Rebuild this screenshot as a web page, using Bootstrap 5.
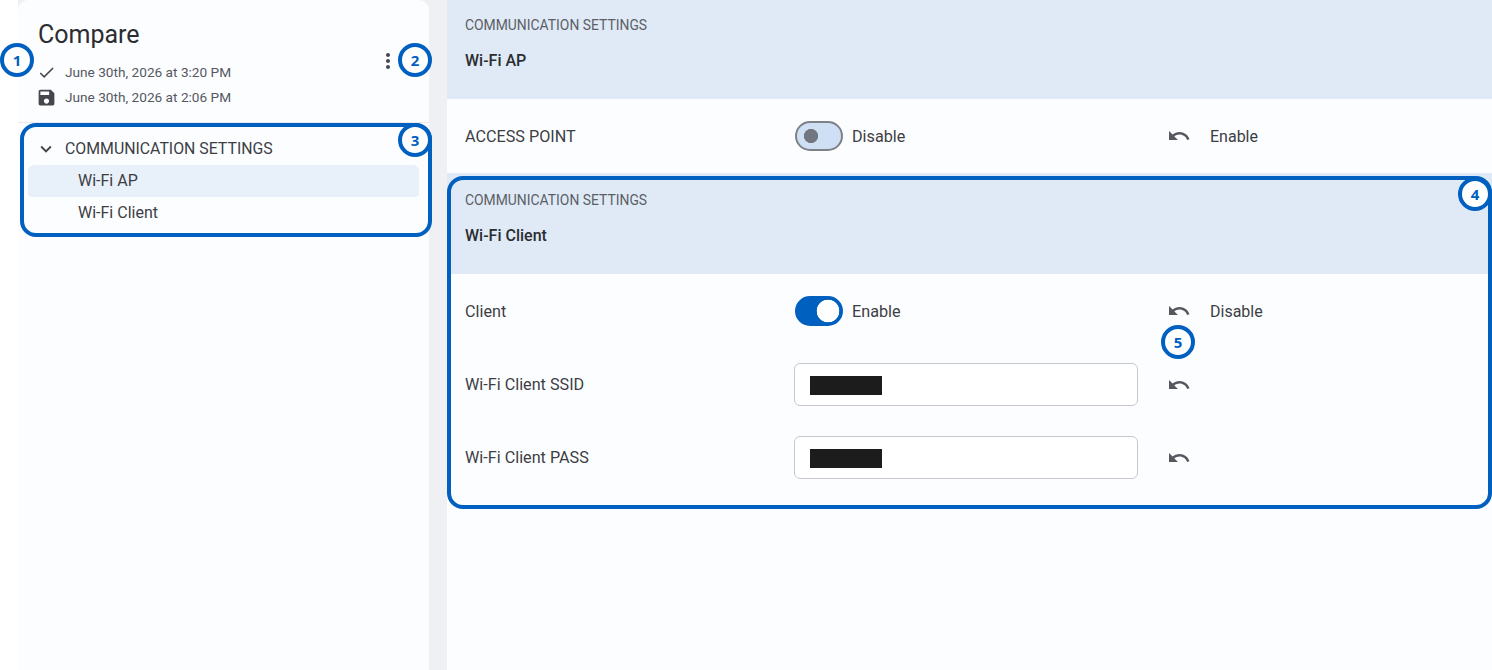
<!DOCTYPE html>
<html lang="en">
<head>
    <meta charset="UTF-8">
    <meta name="viewport" content="width=device-width, initial-scale=1.0">
    <title>Compare</title>
    <link rel="stylesheet" href="https://cdn.jsdelivr.net/npm/bootstrap@5.3.0/dist/css/bootstrap.min.css">
    <style>
        html, body { height: 100%; overflow: hidden; }
        body {
            background-color: #fff;
            color: #3c3e44;
            font-family: Roboto, "Liberation Sans", sans-serif;
            font-size: 16px;
            position: relative;
        }
        .page-wrap { height: 670px; padding-left: 18px; background: #eff0f4; box-shadow: inset 18px 0 0 #fff; }
        .side-panel { width: 411px; background: #fcfdff; border-radius: 10px 10px 0 0; flex-shrink: 0; }
        .main-panel { margin-left: 18px; background: #fcfdff; }
        .side-head { height: 123px; padding: 20px 29px 0 18px; border-bottom: 1px solid #e9eaee; }
        .side-title { font-size: 25px; line-height: 30px; font-weight: 400; color: #2b2d31; margin: 0 0 10px 2px; }
        .date-line { height: 25px; font-size: 13.65px; color: #55585f; gap: 8px; }
        .date-line svg { width: 21px; height: 21px; fill: #44474d; flex-shrink: 0; }
        .date-line svg.tick { width: 19px; height: 19px; margin: 0 1px; }
        .kebab { margin-top: 29px; width: 24px; height: 24px; fill: #44474d; }
        .tree-head { height: 33px; margin-top: 9px; padding: 1px 0 0 17px; gap: 8px; font-size: 15.85px; }
        .tree-head svg { width: 22px; height: 22px; fill: #44474d; margin-top: -1px; }
        .tree-list { margin: 0 10px; --bs-list-group-bg: transparent; --bs-list-group-border-width: 0; }
        .tree-item { height: 32px; padding: 0 0 0 50px; line-height: 31px; font-size: 16px; color: #3c3e44; border-radius: 4px; }
        .tree-item.is-current { background: #e8f0f9; }
        .sect-head { height: 101px; padding: 18px 18px 0; background: #dfeaf6; }
        .sect-first { margin-top: -2px; }
        .sect-label { font-size: 13.9px; line-height: 18px; color: #5c5f66; }
        .sect-name { font-size: 16px; line-height: 20px; font-weight: 500; color: #2b2d31; margin-top: 17px; }
        .cfg-row { height: 73px; padding-left: 18px; font-size: 16.2px; }
        .cfg-tall { height: 74px; }
        .cfg-label { width: 329px; flex-shrink: 0; padding-top: 1px; }
        .cfg-tall .cfg-label { padding-top: 2px; }
        .cfg-control { width: 344px; flex-shrink: 0; gap: 9px; font-size: 16.2px; padding-left: 1px; }
        .cfg-control span { padding-top: 2px; }
        .cfg-control.is-input { padding-left: 0; }
        .cfg-undo { margin-left: 29px; width: 24px; height: 24px; fill: #55585f; flex-shrink: 0; }
        .cfg-old { margin-left: 19px; font-size: 16px; padding-top: 1px; }
        .form-switch .tog { width: 48px; height: 30px; margin: 0; float: none; border-radius: 15px; box-shadow: none; flex-shrink: 0; }
        .form-switch .tog-off {
            background-color: #cfe0f5;
            border: 2px solid #7d8188;
            background-image: radial-gradient(circle at 14px 50%, #72767e 6.8px, transparent 7.4px);
            background-position: 0 0;
        }
        .form-switch .tog-on {
            background-color: #0060bf;
            border: 2px solid #0060bf;
            background-image: radial-gradient(circle at 31px 50%, #fff 11px, transparent 11.6px);
            background-position: 0 0;
        }
        .mask-field { width: 344px; height: 43px; padding: 12px 15px; background: #fff; border-color: #c6c8cd; }
        .mask-bar { width: 72px; height: 19px; background: #1c1c1c; }
        .mark-box { position: absolute; border: 4px solid #0060bf; pointer-events: none; }
        .mark-dot {
            position: absolute; width: 34px; height: 34px; border: 4px solid #0060bf; border-radius: 50%;
            background: #fff; color: #0060bf; font: 700 15px/26px "Open Sans", sans-serif; text-align: center;
        }
    </style>
</head>
<body>
    <svg width="0" height="0" class="position-absolute">
        <symbol id="i-check" viewBox="0 0 24 24"><path d="M9 16.17L4.83 12l-1.42 1.41L9 19 21 7l-1.41-1.41z"/></symbol>
        <symbol id="i-save" viewBox="0 0 24 24"><path d="M17 3H5c-1.11 0-2 .9-2 2v14c0 1.1.89 2 2 2h14c1.1 0 2-.9 2-2V7l-4-4zm-5 16c-1.66 0-3-1.34-3-3s1.34-3 3-3 3 1.34 3 3-1.34 3-3 3zm3-10H5V5h10v4z"/></symbol>
        <symbol id="i-more" viewBox="0 0 24 24"><path d="M12 8c1.1 0 2-.9 2-2s-.9-2-2-2-2 .9-2 2 .9 2 2 2zm0 2c-1.1 0-2 .9-2 2s.9 2 2 2 2-.9 2-2-.9-2-2-2zm0 6c-1.1 0-2 .9-2 2s.9 2 2 2 2-.9 2-2-.9-2-2-2z"/></symbol>
        <symbol id="i-down" viewBox="0 0 24 24"><path d="M16.59 8.59L12 13.17 7.41 8.59 6 10l6 6 6-6z"/></symbol>
        <symbol id="i-undo" viewBox="0 0 24 24"><path d="M12.5 8c-2.65 0-5.05.99-6.9 2.6L2 7v9h9l-3.62-3.62c1.39-1.16 3.16-1.88 5.12-1.88 3.54 0 6.55 2.31 7.6 5.5l2.37-.78C21.08 11.03 17.15 8 12.5 8z"/></symbol>
    </svg>

    <div class="page-wrap d-flex">
        <aside class="side-panel">
            <div class="side-head d-flex justify-content-between">
                <div>
                    <h1 class="side-title">Compare</h1>
                    <div class="date-line d-flex align-items-center"><svg class="tick"><use href="#i-check"/></svg>June 30th, 2026 at 3:20 PM</div>
                    <div class="date-line d-flex align-items-center"><svg><use href="#i-save"/></svg>June 30th, 2026 at 2:06 PM</div>
                </div>
                <svg class="kebab"><use href="#i-more"/></svg>
            </div>
            <div class="tree-head d-flex align-items-center"><svg><use href="#i-down"/></svg>COMMUNICATION SETTINGS</div>
            <div class="list-group tree-list">
                <a class="list-group-item tree-item is-current">Wi-Fi AP</a>
                <a class="list-group-item tree-item">Wi-Fi Client</a>
            </div>
        </aside>

        <main class="main-panel flex-grow-1">
            <div class="sect-head sect-first">
                <div class="sect-label">COMMUNICATION SETTINGS</div>
                <div class="sect-name">Wi-Fi AP</div>
            </div>
            <div class="cfg-row cfg-tall d-flex align-items-center">
                <div class="cfg-label">ACCESS POINT</div>
                <div class="cfg-control form-check form-switch d-flex align-items-center mb-0">
                    <input class="form-check-input tog tog-off" type="checkbox" role="switch"><span>Disable</span>
                </div>
                <svg class="cfg-undo"><use href="#i-undo"/></svg>
                <div class="cfg-old">Enable</div>
            </div>

            <div class="sect-head">
                <div class="sect-label">COMMUNICATION SETTINGS</div>
                <div class="sect-name">Wi-Fi Client</div>
            </div>
            <div class="cfg-row cfg-tall d-flex align-items-center">
                <div class="cfg-label">Client</div>
                <div class="cfg-control form-check form-switch d-flex align-items-center mb-0">
                    <input class="form-check-input tog tog-on" type="checkbox" role="switch" checked><span>Enable</span>
                </div>
                <svg class="cfg-undo"><use href="#i-undo"/></svg>
                <div class="cfg-old">Disable</div>
            </div>
            <div class="cfg-row d-flex align-items-center">
                <div class="cfg-label">Wi-Fi Client SSID</div>
                <div class="cfg-control is-input"><div class="form-control mask-field"><div class="mask-bar"></div></div></div>
                <svg class="cfg-undo"><use href="#i-undo"/></svg>
            </div>
            <div class="cfg-row d-flex align-items-center">
                <div class="cfg-label">Wi-Fi Client PASS</div>
                <div class="cfg-control is-input"><div class="form-control mask-field"><div class="mask-bar"></div></div></div>
                <svg class="cfg-undo"><use href="#i-undo"/></svg>
            </div>
        </main>
    </div>

    <!-- callouts drawn over the screen -->
    <div class="mark-box" style="left:20px;top:123px;width:412px;height:114px;border-radius:16px"></div>
    <div class="mark-box" style="left:447px;top:176px;width:1045px;height:333px;border-radius:16px"></div>
    <div class="mark-dot" style="left:0;top:43px">1</div>
    <div class="mark-dot" style="left:398px;top:43px">2</div>
    <div class="mark-dot" style="left:398px;top:123px">3</div>
    <div class="mark-dot" style="left:1458px;top:177px">4</div>
    <div class="mark-dot" style="left:1161px;top:325px">5</div>

    <script src="https://cdn.jsdelivr.net/npm/bootstrap@5.3.0/dist/js/bootstrap.bundle.min.js"></script>
</body>
</html>
